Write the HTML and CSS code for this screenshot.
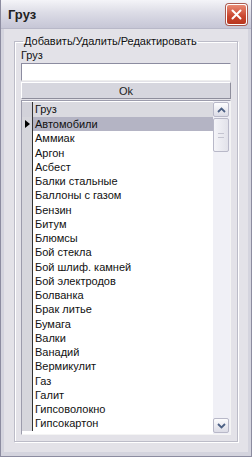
FILE: index.html
```html
<!DOCTYPE html>
<html lang="ru">
<head>
  <meta charset="utf-8">
  <link rel="stylesheet" href="styles.css">
</head>
<body>
  <div class="window">
    <div class="titlebar">
      <span class="title">Груз</span>
      <button class="close-btn">
        <svg width="11" height="11" viewBox="0 0 11 11"><path d="M1.5 1.5 L9.5 9.5 M9.5 1.5 L1.5 9.5" stroke="#fff" stroke-width="2" stroke-linecap="round"/></svg>
      </button>
    </div>

    <div class="body">
      <fieldset class="group">
        <legend>Добавить/Удалить/Редактировать</legend>
        <div class="field-label">Груз</div>
        <input type="text" class="field-input">
        <button class="ok-btn">Ok</button>

        <div class="grid">
          <div class="grid-main">
            <div class="grid-row header">
              <div class="indicator"></div>
              <div class="cell">Груз</div>
            </div>
            <div id="rows"></div>
          </div>
          <div class="scrollbar">
            <div class="sb-btn">
              <svg width="9" height="6" viewBox="0 0 9 6"><path d="M1 5 L4.5 1.5 L8 5" fill="none" stroke="#4d6185" stroke-width="1.8"/></svg>
            </div>
            <div class="sb-thumb"><span class="grip"></span></div>
            <div class="sb-track"></div>
            <div class="sb-btn">
              <svg width="9" height="6" viewBox="0 0 9 6"><path d="M1 1 L4.5 4.5 L8 1" fill="none" stroke="#4d6185" stroke-width="1.8"/></svg>
            </div>
          </div>
        </div>
      </fieldset>
    </div>
  </div>

  <script>
    const items = [
      'Автомобили', 'Аммиак', 'Аргон', 'Асбест', 'Балки стальные',
      'Баллоны с газом', 'Бензин', 'Битум', 'Блюмсы', 'Бой стекла',
      'Бой шлиф. камней', 'Бой электродов', 'Болванка', 'Брак литье',
      'Бумага', 'Валки', 'Ванадий', 'Вермикулит', 'Газ', 'Галит',
      'Гипсоволокно', 'Гипсокартон'
    ];
    const rows = document.getElementById('rows');
    items.forEach((name, i) => {
      const row = document.createElement('div');
      row.className = 'grid-row' + (i === 0 ? ' current' : '');
      row.innerHTML = '<div class="indicator">' + (i === 0 ? '<span class="arrow"></span>' : '') +
        '</div><div class="cell"></div>';
      row.querySelector('.cell').textContent = name;
      rows.appendChild(row);
    });
  </script>
</body>
</html>
```

FILE: styles.css
```css
:root {
  --face: #e3e2e8;
  --title-top: #f4f4f8;
  --title-bot: #c6c6d6;
  --edge-dark: #9c9cb0;
  --text: #111;
  --select: #b4b4c4;
}

* {
  box-sizing: border-box;
}

body {
  margin: 0;
  font-family: "Liberation Sans", Arial, sans-serif;
  font-size: 11px;
  color: var(--text);
  background: #fff;
}

.window {
  width: 252px;
  height: 457px;
  display: flex;
  flex-direction: column;
  background: var(--face);
  border: 1px solid #8c8ca0;
  border-top: none;
}

.titlebar {
  height: 29px;
  display: flex;
  align-items: center;
  justify-content: space-between;
  padding: 0 4px 0 7px;
  background: linear-gradient(to bottom, var(--title-top), #dcdce6 45%, var(--title-bot));
  border-bottom: 1px solid #b8b8c8;
}

.title {
  font-weight: bold;
  font-size: 13px;
  color: #222;
}

.close-btn {
  width: 21px;
  height: 21px;
  padding: 0;
  display: flex;
  align-items: center;
  justify-content: center;
  border: 1px solid #fff;
  border-radius: 3px;
  background: linear-gradient(to bottom, #e88a74, #c9452e 60%, #b8371f);
  box-shadow: 0 0 0 1px #a85a50;
}

.body {
  flex: 1;
  padding: 6px 10px 10px 10px;
  border-left: 3px solid #d4d4de;
  border-right: 3px solid #d4d4de;
  border-bottom: 4px solid #d4d4de;
  display: flex;
}

.group {
  flex: 1;
  margin: 0;
  padding: 0 6px 6px 6px;
  border: 1px solid #bcbcc8;
  box-shadow: inset 1px 1px 0 #fff, 1px 1px 0 #fff;
  display: flex;
  flex-direction: column;
  min-height: 0;
}

.group legend {
  padding: 0 1px;
  margin-left: 2px;
  line-height: 13px;
}

.field-label {
  line-height: 13px;
  margin-top: 1px;
}

.field-input {
  height: 18px;
  margin: 1px 0 1px 0;
  border: 1px solid #8c8ca0;
  border-bottom-color: #eee;
  border-right-color: #eee;
  background: #fff;
  font: inherit;
}

.ok-btn {
  height: 17px;
  padding: 0;
  font: inherit;
  color: #222;
  background: #d6d6de;
  border: 1px solid #fff;
  border-right-color: #8e8e9c;
  border-bottom-color: #8e8e9c;
}

.grid {
  flex: 1;
  margin-top: 1px;
  display: flex;
  background: #fff;
  border: 1px solid #9c9cac;
  border-right-color: #f4f4f4;
  border-bottom-color: #f4f4f4;
  min-height: 0;
}

.grid-main {
  flex: 1;
  display: flex;
  flex-direction: column;
  padding-top: 1px;
  overflow: hidden;
}

.grid-row {
  display: flex;
  height: 14.25px;
  line-height: 14px;
}

.grid-row.header {
  height: 15px;
  background: #dadae0;
}

.grid-row.header .indicator {
  background: #d2d2da;
}

.indicator {
  width: 11px;
  flex: none;
  background: #d6d6dc;
  border-right: 1px solid #333;
  display: flex;
  align-items: center;
  justify-content: center;
}

.cell {
  flex: 1;
  padding-left: 2px;
  white-space: nowrap;
}

.grid-row.current .cell {
  background: var(--select);
}

.arrow {
  width: 0;
  height: 0;
  border-top: 4px solid transparent;
  border-bottom: 4px solid transparent;
  border-left: 5px solid #000;
  margin-left: 1px;
}

.scrollbar {
  width: 17px;
  flex: none;
  display: flex;
  flex-direction: column;
  padding: 1px 1px 1px 0;
  background: #f0f0f6;
}

.sb-btn {
  height: 15px;
  display: flex;
  align-items: center;
  justify-content: center;
  background: linear-gradient(to bottom, #fdfdfe, #dcdce6);
  border: 1px solid #b8b8c8;
  border-radius: 2px;
}

.sb-thumb {
  height: 34px;
  margin-top: 1px;
  display: flex;
  align-items: center;
  justify-content: center;
  background: linear-gradient(to right, #f4f4f8, #e2e2ea);
  border: 1px solid #b8b8c8;
  border-radius: 2px;
}

.grip {
  width: 6px;
  height: 5px;
  border-top: 1px solid #c4c4d0;
  border-bottom: 1px solid #c4c4d0;
}

.sb-track {
  flex: 1;
}
```
